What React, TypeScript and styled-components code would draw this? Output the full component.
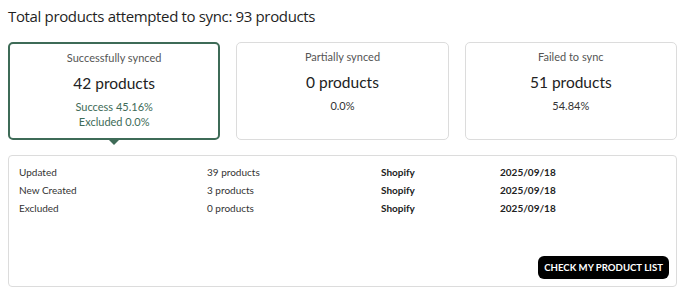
import React from 'react';
import styled, { createGlobalStyle, css } from 'styled-components';

const GlobalStyle = createGlobalStyle`
  html, body {
    margin: 0;
    padding: 0;
    background: #ffffff;
  }
  body {
    font-family: Lato, "Noto Sans", sans-serif;
    color: #222222;
  }
`;

const green = '#3e6b57';

const Page = styled.div`
  padding: 5px 11px 0 8px;
`;

const Title = styled.h1`
  margin: 0;
  font-family: "Open Sans", sans-serif;
  font-weight: 400;
  font-size: 15px;
  letter-spacing: -0.35px;
  line-height: 22px;
  color: #1f1f1f;
`;

const Cards = styled.div`
  display: grid;
  grid-template-columns: repeat(3, 1fr);
  gap: 16px;
  margin-top: 15px;
`;

const Card = styled.div<{ $active?: boolean }>`
  position: relative;
  box-sizing: border-box;
  height: 98px;
  border: 1px solid #dcdcdc;
  border-radius: 5px;
  display: flex;
  flex-direction: column;
  align-items: center;
  padding-top: 6px;
  text-align: center;

  ${p =>
    p.$active &&
    css`
      border: 2px solid ${green};

      &::after {
        content: '';
        position: absolute;
        left: 50%;
        bottom: -7px;
        margin-left: -6px;
        border-left: 6px solid transparent;
        border-right: 6px solid transparent;
        border-top: 6px solid ${green};
      }
    `}
`;

const CardLabel = styled.div`
  font-size: 11px;
  line-height: 16px;
  color: #555555;
`;

const CardCount = styled.div`
  margin-top: 6px;
  font-size: 15.5px;
  line-height: 22px;
  color: #222222;
`;

const Notes = styled.div`
  margin-top: 5px;
`;

const CardNote = styled.div<{ $green?: boolean }>`
  font-size: 11px;
  line-height: 15px;
  color: ${p => (p.$green ? green : '#333333')};
`;

const Panel = styled.div`
  box-sizing: border-box;
  margin-top: 15px;
  height: 132px;
  border: 1px solid #dcdcdc;
  border-radius: 4px;
  padding: 7px 7px 7px 10px;
  display: flex;
  flex-direction: column;
`;

const Rows = styled.div`
  flex: 1;
`;

const Row = styled.div`
  display: grid;
  grid-template-columns: 188px 174px 119px 1fr;
  font-size: 10px;
  line-height: 18px;
  color: #333333;
`;

const Strong = styled.span`
  font-weight: 700;
  color: #222222;
`;

const Footer = styled.div`
  display: flex;
  justify-content: flex-end;
`;

const Button = styled.button`
  height: 23px;
  padding: 0 6px;
  border: none;
  border-radius: 6px;
  background: #000000;
  color: #ffffff;
  font-family: Lato, sans-serif;
  font-weight: 700;
  font-size: 9.6px;
  cursor: pointer;
`;

const rows = [
  { label: 'Updated', count: '39 products' },
  { label: 'New Created', count: '3 products' },
  { label: 'Excluded', count: '0 products' },
];

export default function App() {
  return (
    <>
      <GlobalStyle />
      <Page>
        <Title>Total products attempted to sync: 93 products</Title>
        <Cards>
          <Card $active>
            <CardLabel>Successfully synced</CardLabel>
            <CardCount>42 products</CardCount>
            <Notes>
              <CardNote $green>Success 45.16%</CardNote>
              <CardNote $green>Excluded 0.0%</CardNote>
            </Notes>
          </Card>
          <Card>
            <CardLabel>Partially synced</CardLabel>
            <CardCount>0 products</CardCount>
            <Notes>
              <CardNote>0.0%</CardNote>
            </Notes>
          </Card>
          <Card>
            <CardLabel>Failed to sync</CardLabel>
            <CardCount>51 products</CardCount>
            <Notes>
              <CardNote>54.84%</CardNote>
            </Notes>
          </Card>
        </Cards>
        <Panel>
          <Rows>
            {rows.map(r => (
              <Row key={r.label}>
                <span>{r.label}</span>
                <span>{r.count}</span>
                <Strong>Shopify</Strong>
                <Strong>2025/09/18</Strong>
              </Row>
            ))}
          </Rows>
          <Footer>
            <Button>CHECK MY PRODUCT LIST</Button>
          </Footer>
        </Panel>
      </Page>
    </>
  );
}
